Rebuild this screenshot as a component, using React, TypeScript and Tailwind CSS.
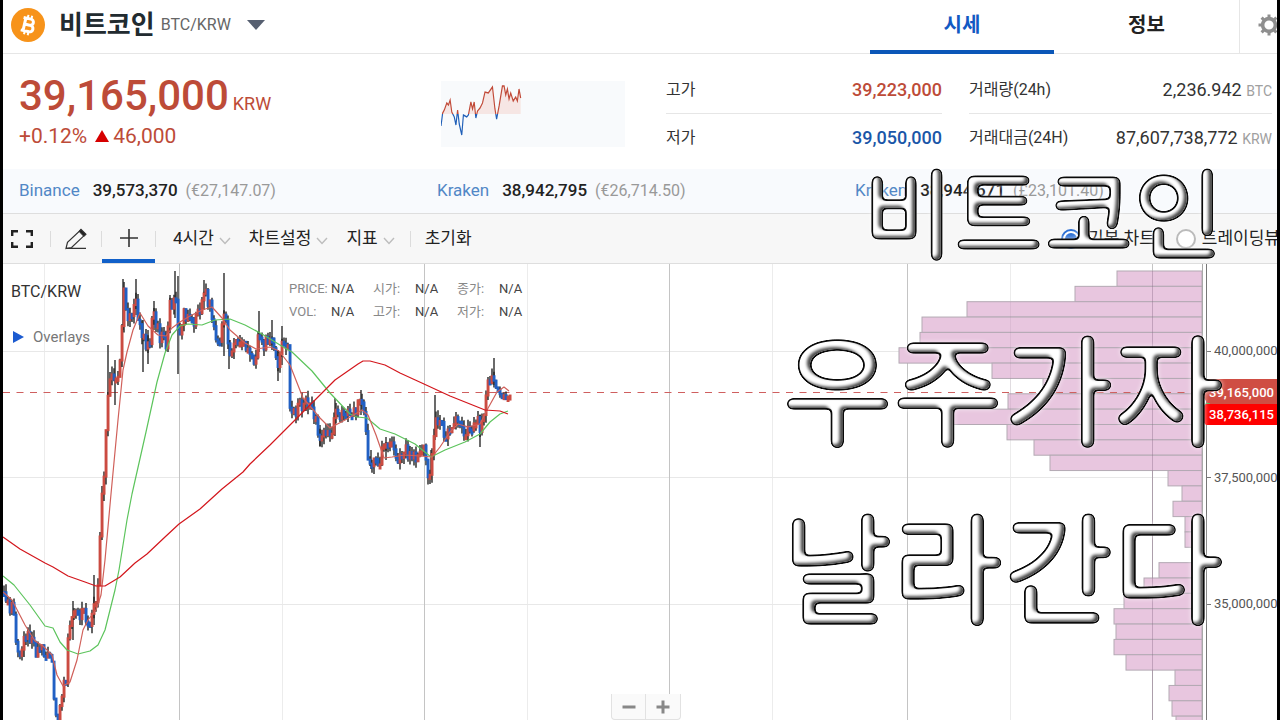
import { useState } from "react";
import type { ReactNode } from "react";

type Point = [number, number];

const exchanges = [
    { name: "Binance", price: "39,573,370", local: "(€27,147.07)" },
    { name: "Kraken", price: "38,942,795", local: "(€26,714.50)" },
    { name: "Kraken", price: "38,944,671", local: "(£23,101.40)" },
];

const legend = [
    ["PRICE:", "시가:", "종가:"],
    ["VOL:", "고가:", "저가:"],
];

// close price along the time axis
const closes: Point[] = [
    [3, 592], [8, 603], [14, 610], [17, 648], [20, 652], [25, 640], [30, 635], [35, 650], [42, 646], [46, 660],
    [52, 657], [54, 700], [58, 730], [62, 692], [66, 682], [68, 640], [70, 628], [74, 616], [78, 616], [84, 615],
    [87, 625], [91, 620], [94, 600], [98, 592], [100, 540], [102, 500], [105, 465], [107, 400], [109, 385], [113, 380],
    [119, 378], [121, 350], [123, 288], [126, 312], [131, 316], [135, 300], [140, 325], [145, 345], [150, 338], [154, 312],
    [160, 336], [166, 345], [170, 308], [175, 296], [179, 330], [185, 314], [195, 319], [200, 312], [204, 288], [210, 304],
    [215, 330], [220, 340], [224, 315], [230, 350], [240, 340], [250, 350], [255, 358], [259, 334], [265, 345], [272, 338],
    [278, 368], [282, 344], [289, 350], [290, 405], [295, 409], [305, 402], [311, 405], [315, 420], [320, 435], [325, 428],
    [333, 430], [335, 412], [345, 415], [355, 410], [361, 400], [365, 410], [367, 452], [373, 462], [380, 458], [387, 445],
    [391, 441], [393, 452], [400, 460], [405, 452], [415, 456], [425, 452], [428, 470], [431, 470], [433, 450], [435, 415],
    [440, 425], [445, 435], [455, 420], [465, 430], [475, 423], [479, 420], [481, 438], [483, 418], [487, 382], [494, 374],
    [497, 390], [503, 397], [510, 393],
];

// candles with unusually long wicks: x, high, low
const spikes: [number, number, number][] = [
    [73, 601, 640], [94, 575, 625], [108, 345, 405], [115, 360, 405], [123, 279, 330], [136, 279, 315], [143, 320, 372],
    [148, 330, 364], [154, 301, 330], [170, 295, 325], [175, 271, 318], [178, 276, 374], [204, 280, 310], [224, 273, 356],
    [229, 340, 369], [259, 311, 352], [272, 320, 350], [278, 350, 381], [282, 326, 365], [320, 425, 446], [335, 398, 436],
    [361, 390, 415], [371, 450, 469], [386, 437, 460], [431, 450, 476], [435, 395, 440], [480, 415, 447], [494, 358, 385],
];

const slowAverage: Point[] = [
    [3, 537], [20, 549], [45, 563], [53, 567], [68, 576], [85, 582], [96, 586], [105, 586], [120, 577], [135, 563],
    [147, 554], [165, 537], [179, 524], [200, 509], [222, 489], [243, 472], [250, 464], [270, 445], [280, 435], [310, 405],
    [335, 380], [358, 364], [363, 361], [370, 361], [385, 365], [400, 373], [424, 384], [450, 396], [475, 406], [485, 410],
    [500, 411], [508, 414],
];

const midAverage: Point[] = [
    [3, 576], [14, 585], [30, 605], [45, 626], [53, 628], [60, 642], [67, 650], [78, 654], [90, 651], [98, 645],
    [105, 630], [115, 590], [119, 570], [127, 520], [132, 494], [146, 432], [157, 382], [165, 353], [172, 335], [180, 326],
    [188, 324], [202, 325], [215, 320], [230, 319], [245, 325], [262, 334], [280, 345], [292, 352], [312, 371], [330, 393],
    [350, 414], [357, 417], [367, 418], [380, 429], [395, 434], [415, 444], [431, 457], [445, 450], [465, 442], [480, 434],
    [490, 422], [500, 414], [508, 411],
];

const fastAverage: Point[] = [
    [3, 592], [12, 600], [25, 625], [35, 641], [43, 646], [52, 655], [57, 675], [63, 686], [70, 682], [77, 660],
    [83, 630], [88, 620], [96, 610], [101, 595], [105, 560], [111, 494], [118, 420], [123, 370], [127, 352], [133, 330],
    [140, 313], [148, 326], [158, 335], [166, 336], [172, 328], [180, 322], [190, 316], [202, 310], [212, 307], [222, 318],
    [230, 330], [245, 343], [256, 349], [270, 347], [279, 351], [290, 365], [303, 398], [310, 406], [320, 418], [330, 428],
    [345, 420], [362, 410], [368, 415], [376, 435], [384, 458], [392, 457], [405, 455], [420, 456], [432, 457], [440, 447],
    [450, 432], [458, 424], [468, 427], [480, 424], [487, 410], [497, 392], [504, 387], [509, 391],
];

// left edge of every volume bar, top to bottom
const volume = [
    1117, 1075, 967, 922, 920, 899, 992, 1043, 1008, 947, 1007, 1034, 1050, 1168, 1182, 1173, 1185, 1185, 1194, 1159, 1144,
    1124, 1114, 1116, 1114, 1126, 1175, 1169, 1172, 1176,
];

const sparkline: Point[] = [
    [0, 45], [2, 32], [4, 29], [7, 22], [9, 24], [11, 19], [13, 31], [16, 36], [18, 44], [20, 29], [22, 43], [25, 54],
    [27, 34], [31, 36], [33, 34], [36, 21], [38, 28], [40, 21], [42, 37], [44, 30], [47, 27], [50, 22], [53, 11], [57, 12],
    [62, 6], [65, 28], [67, 38], [70, 25], [74, 5], [76, 5], [78, 14], [80, 8], [82, 18], [84, 12], [87, 20], [90, 16],
    [92, 20], [94, 8], [96, 17],
];

function toPath(points: Point[]) {
    return "M" + points.map((p) => p.join(" ")).join("L");
}

function valueAt(x: number) {
    const i = Math.max(1, closes.findIndex((c) => c[0] >= x));
    const [x0, y0] = closes[i - 1];
    const [x1, y1] = closes[i];
    return y0 + ((y1 - y0) * (x - x0)) / (x1 - x0);
}

function noise(n: number) {
    const v = Math.sin(n * 12.9898) * 43758.5453;
    return v - Math.floor(v);
}

function buildCandles() {
    const out = [];
    let open = valueAt(3);
    for (let x = 4; x <= 510; x += 2) {
        const close = valueAt(x) + (noise(x) - 0.5) * (x > 495 ? 6 : 15);
        const top = Math.min(open, close);
        const bottom = Math.max(open, close);
        const reach = x > 495 ? 4 : 8;
        out.push({
            x,
            top: top - 1,
            height: Math.max(6, bottom - top + 2),
            high: top - noise(x + 7) * reach,
            low: bottom + noise(x + 13) * reach,
            up: close < open,
        });
        open = close;
    }
    return out;
}

const candles = buildCandles();

function BitcoinLogo() {
    return (
        <svg viewBox="0 0 34 34" className="size-[34px] shrink-0" aria-hidden="true">
            <circle cx="17" cy="17" r="17" fill="#f7931a" />
            <g transform="rotate(13 17 17)" fill="none" stroke="#fff" strokeWidth="3">
                <path d="M11 10.6h7.6a3 3 0 0 1 0 6.2h-5M13.4 16.8h6a3.2 3.2 0 0 1 0 6.6H11M13.4 10.6v12.8" />
                <path d="M15.2 7v4M19 7v4M15.2 23v4M19 23v4" strokeWidth="2" />
            </g>
        </svg>
    );
}

function GearIcon() {
    return (
        <svg viewBox="0 0 22 22" className="size-[22px]" aria-hidden="true">
            <g stroke="#8f8f8f" fill="none">
                <circle cx="11" cy="11" r="6.4" strokeWidth="3.6" />
                <path
                    d="M11 0.5v4M11 17.5v4M0.5 11h4M17.5 11h4M3.6 3.6l2.8 2.8M15.6 15.6l2.8 2.8M3.6 18.4l2.8-2.8M15.6 6.4l2.8-2.8"
                    strokeWidth="3"
                />
            </g>
        </svg>
    );
}

function Divider() {
    return <span className="h-4 w-px shrink-0 bg-[#dcdcdc]" />;
}

function ToolSelect({ label }: { label: string }) {
    return (
        <label className="flex items-center gap-[5px]">
            <select aria-label={label} className="appearance-none bg-transparent [field-sizing:content]">
                <option>{label}</option>
            </select>
            <svg viewBox="0 0 12 8" className="mt-1 h-2 w-3" aria-hidden="true">
                <path d="M1 1l5 5.5L11 1" fill="none" stroke="#bdbdbd" strokeWidth="1.4" />
            </svg>
        </label>
    );
}

function Stat({ label, children }: { label: string; children: ReactNode }) {
    return (
        <div className="flex h-12 items-center justify-between">
            <dt className="text-base text-[#333]">{label}</dt>
            <dd className="text-lg text-[#333]">{children}</dd>
        </div>
    );
}

function Header() {
    return (
        <header className="flex h-[54px] shrink-0 border-b border-[#e6e6e6]">
            <div className="flex flex-1 items-center pb-1 pl-2">
                <BitcoinLogo />
                <h1 className="ml-[14px] text-[26px] font-bold leading-8 text-[#222b30]">비트코인</h1>
                <span className="ml-[6px] text-base text-[#666]">BTC/KRW</span>
                <button aria-label="코인 선택" className="ml-4">
                    <svg viewBox="0 0 18 10" className="h-[10px] w-[18px]" aria-hidden="true">
                        <path d="M0 0h18L9 10z" fill="#565f70" />
                    </svg>
                </button>
            </div>
            <nav className="flex text-xl font-bold leading-[50px]">
                <a href="#price" className="-mb-px w-[184px] border-b-4 border-[#0b57b8] text-center text-[#1259c3]">
                    시세
                </a>
                <a href="#info" className="w-[185px] text-center text-[#222]">
                    정보
                </a>
            </nav>
            <button aria-label="설정" className="-mr-5 flex w-[58px] shrink-0 items-center justify-center border-l border-[#e6e6e6] pb-1">
                <GearIcon />
            </button>
        </header>
    );
}

function Summary() {
    return (
        <section className="flex h-[115px] shrink-0 items-center pl-4 pr-[5px] pt-[5px]">
            <div className="flex-1 text-[#bd4b38]">
                <p className="flex items-baseline gap-1 leading-[44px]">
                    <strong className="text-[42px] font-medium">39,165,000</strong>
                    <span className="text-lg">KRW</span>
                </p>
                <p className="flex items-center gap-2 text-[21px] leading-9">
                    +0.12%
                    <svg viewBox="0 0 14 12" className="h-3 w-[14px]" aria-hidden="true">
                        <path d="M7 0l7 12H0z" fill="#d60000" />
                    </svg>
                    <span className="-ml-1">46,000</span>
                </p>
            </div>
            <svg viewBox="0 0 184 66" className="mr-[41px] h-[66px] w-[184px] shrink-0 bg-[#f8fafc]" aria-hidden="true">
                <defs>
                    <clipPath id="above">
                        <path d="M0 0H184V33H0z" />
                    </clipPath>
                    <clipPath id="below">
                        <path d="M0 33H184V66H0z" />
                    </clipPath>
                </defs>
                <g transform="scale(0.83 1)" fill="none" strokeWidth="1.4">
                    <path d={toPath(sparkline) + "V33H0z"} fill="#f6e6e4" clipPath="url(#above)" />
                    <path d={toPath(sparkline)} stroke="#c14a38" clipPath="url(#above)" />
                    <path d={toPath(sparkline)} stroke="#1f5fb8" clipPath="url(#below)" />
                </g>
            </svg>
            <dl className="mr-[27px] w-[276px] shrink-0 divide-y divide-[#e6e6e6]">
                <Stat label="고가">
                    <span className="font-medium text-[#bd4b38]">39,223,000</span>
                </Stat>
                <Stat label="저가">
                    <span className="font-medium text-[#1a56a8]">39,050,000</span>
                </Stat>
            </dl>
            <dl className="w-[303px] shrink-0 divide-y divide-[#e6e6e6]">
                <Stat label="거래량(24h)">
                    2,236.942 <span className="text-sm text-[#a0a0a0]">BTC</span>
                </Stat>
                <Stat label="거래대금(24H)">
                    87,607,738,772 <span className="text-sm text-[#a0a0a0]">KRW</span>
                </Stat>
            </dl>
        </section>
    );
}

function Exchanges() {
    return (
        <section className="grid h-11 shrink-0 grid-cols-3 items-center bg-[#f8fafd] pl-4 pr-1">
            {exchanges.map((item) => (
                <div key={item.price} className="flex items-center text-[17px]">
                    <span className="text-[#5187c6]">{item.name}</span>
                    <span className="ml-[13px] font-medium text-[#222]">{item.price}</span>
                    <span className="ml-2 text-base text-[#999]">{item.local}</span>
                </div>
            ))}
        </section>
    );
}

function Toolbar() {
    const [mode, setMode] = useState("basic");
    const radio =
        "grid size-5 shrink-0 appearance-none place-items-center rounded-full border-2 border-[#bbb] bg-white before:size-3 before:rounded-full checked:border-[#2b6fd4] checked:before:bg-[#2b6fd4]";

    return (
        <section className="flex h-[51px] shrink-0 items-center whitespace-nowrap border-y border-[#dedede] bg-[#f7f7f7] text-[17px] text-[#222]">
            <button aria-label="전체 화면" className="px-2">
                <svg viewBox="0 0 22 18" className="h-[18px] w-[22px]" fill="none" stroke="#222" strokeWidth="2.4" aria-hidden="true">
                    <path d="M1.2 6V1.2H7M15 1.2h5.8V6M20.8 12v4.8H15M7 16.8H1.2V12" />
                </svg>
            </button>
            <span className="w-[9px]" />
            <Divider />
            <button aria-label="그리기" className="px-[14px]">
                <svg viewBox="0 0 22 22" className="size-[22px]" fill="none" stroke="#333" strokeWidth="1.2" aria-hidden="true">
                    <path d="M1 20.4l1.5-6L15.6 2l4.6 4.6L6.6 19.5zM1 20.4h20" />
                    <path d="M14.2 3.3l1.8-1.9 4.9 4.9-2 1.8z" fill="#222" />
                </svg>
            </button>
            <Divider />
            <button aria-label="십자선" className="flex h-full w-[53px] items-center justify-center border-b-4 border-[#1160c9] pt-[2px]">
                <svg viewBox="0 0 20 20" className="size-5" stroke="#333" strokeWidth="1.6" aria-hidden="true">
                    <path d="M10 1v18M1 10h18" />
                </svg>
            </button>
            <Divider />
            <div className="ml-[17px] flex items-center gap-[18px]">
                <ToolSelect label="4시간" />
                <ToolSelect label="차트설정" />
                <ToolSelect label="지표" />
            </div>
            <span className="w-[15px]" />
            <Divider />
            <button className="ml-[14px]">초기화</button>
            <div className="-mr-[3px] ml-auto flex items-center gap-[21px]">
                <label className="flex items-center gap-[7px]">
                    <input type="radio" name="mode" className={radio} checked={mode === "basic"} onChange={() => setMode("basic")} />
                    기본 차트
                </label>
                <label className="flex items-center gap-[6px]">
                    <input type="radio" name="mode" className={radio} checked={mode === "view"} onChange={() => setMode("view")} />
                    트레이딩뷰
                </label>
            </div>
        </section>
    );
}

function PriceChart() {
    return (
        <svg viewBox="3 264 1274 456" preserveAspectRatio="xMinYMin slice" className="h-full w-full" role="img" aria-label="BTC/KRW">
            <g strokeWidth="1">
                <path d="M44.5 264V720M282.5 264V720M527.5 264V720M772.5 264V720M1010.5 264V720" stroke="#ececec" />
                <path d="M3 351.5H1202M3 477.5H1202M3 604.5H1202" stroke="#e8e8e8" />
                <path d="M179.5 264V720M424.5 264V720M669.5 264V720M907.5 264V720M1152.5 264V720" stroke="#c4c4c4" />
            </g>

            {volume.map((left, i) => (
                <rect key={i} x={left} y={271 + i * 15.35} width={1202 - left} height="15.35" fill="#e8c6df" stroke="#b3a9b3" strokeWidth="1" />
            ))}
            <path d="M1152.5 271V720" stroke="#8a6a88" strokeOpacity="0.4" />
            <path d="M1010.5 302V440" stroke="#8a6a88" strokeOpacity="0.12" />
            <path d="M1202.5 264V720" stroke="#a9a9a9" />
            <path d="M1206.5 264V720" stroke="#777" />

            <path d="M3 392.5H1202" stroke="#cf5f5f" strokeDasharray="7 6.5" />

            {spikes.map(([x, high, low]) => (
                <path key={x} d={`M${x} ${high}V${low}`} stroke="#2c2c2c" strokeWidth="1.4" />
            ))}
            {candles.map((c) => (
                <g key={c.x}>
                    <path d={`M${c.x} ${c.high}V${c.low}`} stroke="#222" strokeWidth="1.4" />
                    <rect x={c.x - 1.4} y={c.top} width="2.9" height={c.height} fill={c.up ? "#cb4b41" : "#2160c4"} />
                </g>
            ))}

            <g fill="none" strokeWidth="1.2" strokeLinejoin="round">
                <path d={toPath(midAverage)} stroke="#5cc45c" />
                <path d={toPath(fastAverage)} stroke="#d0605a" />
                <path d={toPath(slowAverage)} stroke="#d3161c" />
            </g>

            <g fontSize="13" fill="#555">
                <path d="M1206 351.5h5M1206 477.5h5M1206 604.5h5" stroke="#777" />
                <text x="1214" y="355">40,000,000</text>
                <text x="1214" y="482">37,500,000</text>
                <text x="1214" y="608">35,000,000</text>
            </g>
            <g fontSize="13" fontWeight="500" fill="#fff">
                <path d="M1200 392l8-13h69v25h-69z" fill="#cf4d43" />
                <path d="M1198 412l8-9h4v4z" fill="#5cb85c" />
                <path d="M1196 414l10-10h71v21h-71z" fill="#fe0000" />
                <text x="1209" y="397">39,165,000</text>
                <text x="1209" y="419">38,736,115</text>
            </g>
        </svg>
    );
}

function Caption() {
    return (
        <div className="pointer-events-none absolute right-[53px] top-[129px] flex flex-col items-end whitespace-nowrap text-[120px] font-normal leading-[178px] text-white [filter:url(#bevel)]">
            <svg className="absolute size-0" aria-hidden="true">
                <filter id="bevel" x="-5%" y="-5%" width="110%" height="110%" colorInterpolationFilters="sRGB">
                    <feGaussianBlur in="SourceAlpha" stdDeviation="2.6" />
                    <feComponentTransfer result="body">
                        <feFuncA type="linear" slope="7" intercept="-3" />
                    </feComponentTransfer>
                    <feFlood floodColor="#fff" />
                    <feComposite in2="body" operator="in" result="face" />
                    <feGaussianBlur in="body" stdDeviation="1.6" />
                    <feComponentTransfer result="edge">
                        <feFuncA type="linear" slope="10" intercept="-0.8" />
                    </feComponentTransfer>
                    <feGaussianBlur in="edge" stdDeviation="2.5" result="halo" />
                    <feFlood floodColor="#fff" floodOpacity="0.7" />
                    <feComposite in2="halo" operator="in" result="glow" />
                    <feFlood floodColor="#0a0a0a" />
                    <feComposite in2="edge" operator="in" result="outline" />
                    <feOffset in="body" dx="-3" dy="-2" />
                    <feGaussianBlur stdDeviation="1.5" result="shifted" />
                    <feFlood floodColor="#4a4a4a" />
                    <feComposite in2="body" operator="in" />
                    <feComposite in2="shifted" operator="out" result="shade" />
                    <feMerge>
                        <feMergeNode in="glow" />
                        <feMergeNode in="outline" />
                        <feMergeNode in="face" />
                        <feMergeNode in="shade" />
                    </feMerge>
                </filter>
            </svg>
            <p className="text-[98px]">비트코인</p>
            <p>우주가자</p>
            <p>날라간다</p>
        </div>
    );
}

export default function App() {
    return (
        <div className="relative flex h-screen min-h-[480px] flex-col overflow-hidden border-x-[3px] border-black bg-white font-[Roboto,'Noto_Sans_CJK_KR',sans-serif]">
            <Header />
            <Summary />
            <Exchanges />
            <Toolbar />
            <main className="relative min-h-0 flex-1">
                <PriceChart />
                <div className="absolute left-2 top-4 text-[#333]">
                    <h2 className="text-base leading-6">BTC/KRW</h2>
                    <button className="mt-[22px] flex items-center gap-2 text-[15px] text-[#777]">
                        <svg viewBox="0 0 12 12" className="ml-[2px] size-3" aria-hidden="true">
                            <path d="M0 0l11 6-11 6z" fill="#1c5bd0" />
                        </svg>
                        Overlays
                    </button>
                </div>
                <dl className="absolute left-[286px] top-[13px] flex flex-col text-[13px] leading-[23px] text-[#888]">
                    {legend.map((row) => (
                        <div key={row[0]} className="flex">
                            {row.map((name) => (
                                <div key={name} className="flex w-[84px]">
                                    <dt className="w-[42px]">{name}</dt>
                                    <dd className="text-[#444]">N/A</dd>
                                </div>
                            ))}
                        </div>
                    ))}
                </dl>
                <div className="absolute bottom-0 left-[608px] flex h-[26px] divide-x divide-[#e2e2e2] rounded-b border border-t-0 border-[#e2e2e2] bg-[#fafafa]">
                    <button aria-label="축소" className="grid w-[34px] place-items-center">
                        <svg viewBox="0 0 14 14" className="size-[14px]" stroke="#888" strokeWidth="3" aria-hidden="true">
                            <path d="M0.5 7h13" />
                        </svg>
                    </button>
                    <button aria-label="확대" className="grid w-[34px] place-items-center">
                        <svg viewBox="0 0 14 14" className="size-[14px]" stroke="#888" strokeWidth="3" aria-hidden="true">
                            <path d="M0.5 7h13M7 0.5v13" />
                        </svg>
                    </button>
                </div>
            </main>
            <Caption />
        </div>
    );
}
